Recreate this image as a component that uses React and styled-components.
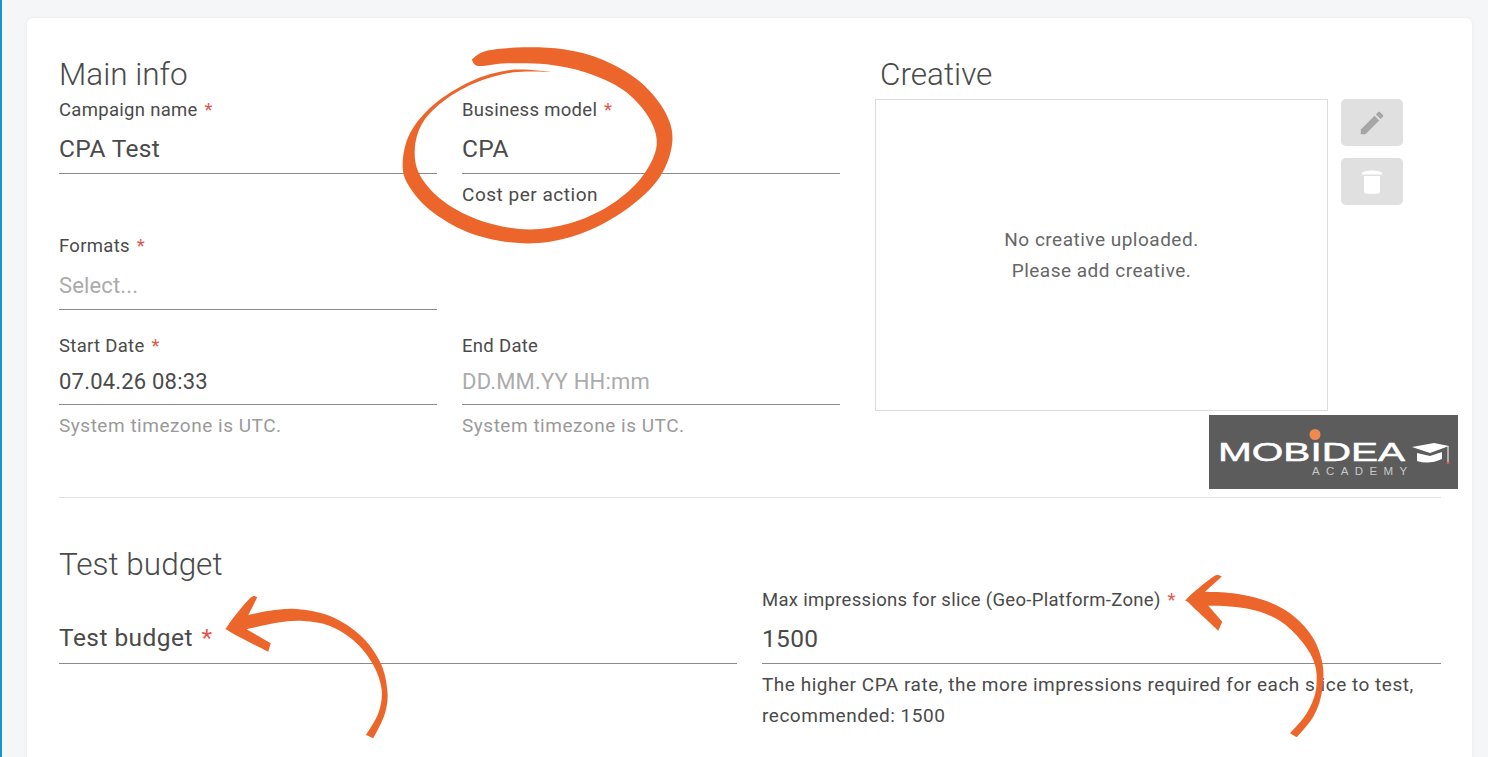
import React from "react";
import styled, { createGlobalStyle } from "styled-components";

const Global = createGlobalStyle`
  html, body { margin: 0; padding: 0; height: 757px; overflow: hidden; background: #f4f6f8; }
  body { font-family: Roboto, "Liberation Sans", sans-serif; color: #4a4a4a; }
  * { box-sizing: border-box; }
`;

const Page = styled.div`
  position: relative;
  width: 1488px;
  height: 757px;
  overflow: hidden;
  border-left: 2px solid #1b95c9;
  padding: 18px 16px 0 25px;
  background: #f4f6f8;
`;
const Card = styled.main`
  width: 1445px;
  height: 780px;
  padding: 37px 31px 0 32px;
  background: #fff;
  border-radius: 6px;
  box-shadow: 0 0 4px rgba(0, 0, 0, 0.06);
`;
const TopGrid = styled.section`
  display: grid;
  grid-template-columns: 781px 453px 62px;
  column-gap: 35px;
`;
const Heading = styled.h2`
  margin: 0;
  font-size: 31.5px;
  font-weight: 300;
  line-height: 40px;
  color: #4a4a4a;
  padding-left: ${(p) => p.$inset || 0}px;
`;
const FormGrid = styled.div`
  display: grid;
  grid-template-columns: 378px 378px;
  grid-template-rows: 136px 100px auto;
  column-gap: 25px;
  margin-top: 2px;
`;
const Field = styled.div`
  min-width: 0;
`;
const Label = styled.label`
  display: block;
  font-size: 18.5px;
  line-height: 26px;
  letter-spacing: 0.3px;
  color: #4a4a4a;
`;
const Star = styled.span`
  color: #e2574c;
  margin-left: 2px;
`;
const InputBox = styled.div`
  display: flex;
  align-items: center;
  height: ${(p) => p.$h ?? 51}px;
  padding-top: ${(p) => p.$pt ?? 1}px;
  border-bottom: 1px solid #8a8a8a;
  font-size: ${(p) => p.$size || 24.5}px;
  letter-spacing: ${(p) => p.$ls ?? 0.35}px;
  color: ${(p) => (p.$muted ? "#ababab" : "#4a4a4a")};
`;
const Helper = styled.div`
  margin-top: ${(p) => p.$mt ?? 9}px;
  font-size: 19px;
  line-height: ${(p) => p.$lh || 24}px;
  letter-spacing: 0.52px;
  color: ${(p) => (p.$muted ? "#9a9a9a" : "#4a4a4a")};
`;
const CreativeCol = styled.div``;
const CreativeBox = styled.div`
  margin-top: 4px;
  height: 312px;
  border: 1px solid #dcdcdc;
  display: flex;
  flex-direction: column;
  align-items: center;
  justify-content: center;
  font-size: 19px;
  line-height: 31px;
  letter-spacing: 0.5px;
  color: #666;
`;
const ActionCol = styled.div`
  display: flex;
  flex-direction: column;
  gap: 12px;
  padding-top: 44px;
  margin-left: -22px;
`;
const IconButton = styled.button`
  width: 62px;
  height: 47px;
  padding: 0;
  border: 0;
  border-radius: 5px;
  background: #e0e0e0;
  display: flex;
  align-items: center;
  justify-content: center;
`;
const Divider = styled.hr`
  margin: 59px 0 47px;
  border: 0;
  border-top: 1px solid #e2e2e2;
`;
const BudgetGrid = styled.section`
  display: grid;
  grid-template-columns: 678px 679px;
  column-gap: 25px;
`;
const BudgetRight = styled.div`
  padding-top: 42px;
`;
const BudgetLeft = styled.div`
  display: flex;
  flex-direction: column;
`;
const FloatingBox = styled(InputBox)`
  margin-top: 28px;
  padding-bottom: 2px;
`;
const Overlay = styled.svg`
  position: absolute;
  left: -2px;
  top: 0;
  pointer-events: none;
`;
const Logo = styled.div`
  position: absolute;
  left: 1207px;
  top: 415px;
  width: 249px;
  height: 74px;
  background: #5c5c5c;
  padding: 27px 0 0 9px;
`;
const Wordmark = styled.div`
  font-family: "Liberation Sans", sans-serif;
  font-weight: 400;
  font-size: 26px;
  line-height: 20px;
  height: 20px;
  color: #fff;
  -webkit-text-stroke: 0.5px #fff;
  transform: scaleX(1.56);
  transform-origin: left center;
`;
const Subline = styled.div`
  margin: 4px 0 0 94px;
  font-family: "Liberation Sans", sans-serif;
  font-size: 11.5px;
  line-height: 10px;
  height: 10px;
  letter-spacing: 6.4px;
  color: #c8c8c8;
`;
const LogoMark = styled.svg`
  position: absolute;
  left: 0;
  top: 0;
`;

const curve = (pts) => {
  let d = "";
  for (let i = 0; i < pts.length - 1; i++) {
    const p0 = pts[i - 1] || pts[i];
    const p1 = pts[i];
    const p2 = pts[i + 1];
    const p3 = pts[i + 2] || p2;
    const c1 = [p1[0] + (p2[0] - p0[0]) / 6, p1[1] + (p2[1] - p0[1]) / 6];
    const c2 = [p2[0] - (p3[0] - p1[0]) / 6, p2[1] - (p3[1] - p1[1]) / 6];
    d += ` C${c1[0].toFixed(1)} ${c1[1].toFixed(1)} ${c2[0].toFixed(1)} ${c2[1].toFixed(1)} ${p2[0].toFixed(1)} ${p2[1].toFixed(1)}`;
  }
  return d;
};
const shape = (ox, oy, sections) => {
  const mapped = sections.map((s) => s.map(([x, y]) => [ox + x / 3, oy + y / 3]));
  let d = `M${mapped[0][0][0].toFixed(1)} ${mapped[0][0][1].toFixed(1)}`;
  mapped.forEach((s, i) => {
    if (i > 0) d += ` L${s[0][0].toFixed(1)} ${s[0][1].toFixed(1)}`;
    d += curve(s);
  });
  return d + " Z";
};

const circle = shape(390, 30, [
  [[245, 88], [290, 62], [400, 52], [520, 58], [640, 90], [750, 155], [825, 245], [847, 335], [810, 440], [720, 530], [600, 600], [480, 635], [360, 637], [230, 605], [120, 540], [55, 465], [38, 400], [60, 310], [130, 225], [240, 155], [360, 120], [485, 125]],
  [[485, 125], [370, 127], [260, 157], [165, 210], [100, 275], [75, 350], [85, 425], [140, 497], [230, 555], [340, 590], [450, 597], [570, 570], [680, 512], [760, 435], [800, 345], [775, 260], [700, 180], [590, 128], [470, 103], [350, 100], [265, 108], [245, 88]],
]);
const arrowA = shape(190, 590, [
  [[550, 445], [585, 370], [592, 300], [570, 215], [510, 135], [420, 78], [320, 57], [240, 62], [175, 75]],
  [[175, 75], [202, 22]],
  [[202, 22], [180, 25], [115, 105], [120, 125], [235, 185]],
  [[235, 185], [242, 160]],
  [[242, 160], [170, 118]],
  [[170, 118], [260, 98], [340, 93], [420, 108], [495, 155], [550, 225], [575, 300], [565, 370], [528, 435]],
]);
const arrowB = shape(1150, 565, [
  [[440, 517], [490, 455], [515, 385], [518, 300], [487, 215], [420, 145], [340, 105], [250, 85], [165, 80]],
  [[165, 80], [215, 35]],
  [[215, 35], [190, 35], [112, 100], [118, 115], [205, 197]],
  [[205, 197], [217, 170]],
  [[217, 170], [175, 122]],
  [[175, 122], [250, 125], [330, 140], [400, 175], [460, 235], [495, 300], [498, 375], [470, 445], [420, 505]],
]);

const Req = () => <Star>*</Star>;

export default function App() {
  return (
    <>
      <Global />
      <Page>
        <Card>
          <TopGrid>
            <div>
              <Heading>Main info</Heading>
              <FormGrid>
                <Field>
                  <Label>Campaign name <Req /></Label>
                  <InputBox>CPA Test</InputBox>
                </Field>
                <Field>
                  <Label>Business model <Req /></Label>
                  <InputBox>CPA</InputBox>
                  <Helper>Cost per action</Helper>
                </Field>
                <Field>
                  <Label>Formats <Req /></Label>
                  <InputBox $size={22} $pt={3} $muted $ls={0.15}>Select...</InputBox>
                </Field>
                <div />
                <Field>
                  <Label>Start Date <Req /></Label>
                  <InputBox $h={46} $pt={0} $size={22} $ls={0.2}>07.04.26 08:33</InputBox>
                  <Helper $muted>System timezone is UTC.</Helper>
                </Field>
                <Field>
                  <Label>End Date</Label>
                  <InputBox $h={46} $pt={0} $size={22} $ls={0.2} $muted>DD.MM.YY HH:mm</InputBox>
                  <Helper $muted>System timezone is UTC.</Helper>
                </Field>
              </FormGrid>
            </div>
            <CreativeCol>
              <Heading $inset={5}>Creative</Heading>
              <CreativeBox>
                <div>No creative uploaded.</div>
                <div>Please add creative.</div>
              </CreativeBox>
            </CreativeCol>
            <ActionCol>
              <IconButton aria-label="Edit">
                <svg width="30" height="30" viewBox="0 0 24 24" fill="#a6a6a6">
                  <path d="M3 17.25V21h3.75L17.81 9.94l-3.75-3.75L3 17.25zM20.71 7.04c.39-.39.39-1.02 0-1.41l-2.34-2.34c-.39-.39-1.02-.39-1.41 0l-1.83 1.83 3.75 3.75 1.83-1.83z" />
                </svg>
              </IconButton>
              <IconButton aria-label="Delete">
                <svg width="22" height="26" viewBox="0 0 22 26" fill="#fff">
                  <path d="M1 4.5C1 2.5 6 1.5 11 1.5s10 1 10 3v1H1z" />
                  <path d="M3 7h16v15c0 1.6-1.2 2.8-2.8 2.8H5.8C4.2 24.8 3 23.6 3 22z" />
                </svg>
              </IconButton>
            </ActionCol>
          </TopGrid>
          <Divider />
          <BudgetGrid>
            <BudgetLeft>
              <Heading>Test budget</Heading>
              <FloatingBox $pt={0} $ls={0.45}>Test budget<Star>&nbsp;*</Star></FloatingBox>
            </BudgetLeft>
            <BudgetRight>
              <Label>Max impressions for slice (Geo-Platform-Zone) <Req /></Label>
              <InputBox>1500</InputBox>
              <Helper $mt={5} $lh={31}>
                The higher CPA rate, the more impressions required for each slice to test,
                <br />
                recommended: 1500
              </Helper>
            </BudgetRight>
          </BudgetGrid>
        </Card>
        <Overlay width="1488" height="757" viewBox="0 0 1488 757">
          <path d={circle} fill="#ec662c" />
          <path d={arrowA} fill="#ec662c" />
          <path d={arrowB} fill="#ec662c" />
        </Overlay>
        <Logo>
          <Wordmark>MOBIDEA</Wordmark>
          <Subline>ACADEMY</Subline>
          <LogoMark width="249" height="74" viewBox="0 0 249 74">
            <circle cx="106" cy="19.5" r="5.5" fill="#f0894f" />
            <path d="M203 32 L225 28 L240 31 L221 38 Z" fill="#fff" />
            <path d="M208 38 L221 41 L233 37 V44 Q220 50 208 46 Z" fill="#fff" />
            <path d="M239 31 V47" stroke="#fff" strokeWidth="1" />
            <circle cx="239" cy="48" r="1.3" fill="#e2574c" />
          </LogoMark>
        </Logo>
      </Page>
    </>
  );
}
